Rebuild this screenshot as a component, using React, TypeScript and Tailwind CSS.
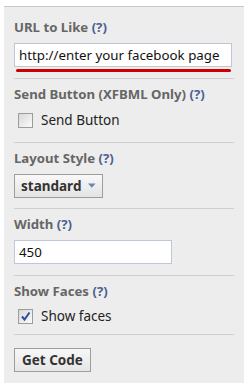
import React, { useState } from "react";

const font = { fontFamily: '"Noto Sans", Tahoma, sans-serif' };

const Label: React.FC<{ text: string }> = ({ text }) => (
  <div className="text-[13.2px] leading-[16px] font-bold text-[#666666]">
    {text} <span className="text-[#4b5f91]">(?)</span>
  </div>
);

const Separator: React.FC<{ className?: string }> = ({ className }) => (
  <div className={`h-px bg-[#cfcfcf] ${className ?? ""}`} />
);

const CheckBox: React.FC<{ checked: boolean; label: string; onToggle: () => void }> = ({
  checked,
  label,
  onToggle,
}) => (
  <div className="flex items-center gap-[8px] pl-[4px] cursor-pointer" onClick={onToggle}>
    <div className="w-[15px] h-[15px] border border-[#9c9c9c] bg-gradient-to-br from-[#d8d8d8] to-[#fbfbfb] flex items-center justify-center">
      {checked && (
        <svg width="11" height="11" viewBox="0 0 11 11">
          <path d="M2 5.5 L4.5 8.5 L9.5 1.5" fill="none" stroke="#2c4ea0" strokeWidth="2" />
        </svg>
      )}
    </div>
    <span className="text-[13.5px] leading-[16px] text-[#222222]">{label}</span>
  </div>
);

export default function App() {
  const [url, setUrl] = useState("http://enter your facebook page");
  const [width, setWidth] = useState("450");
  const [send, setSend] = useState(false);
  const [faces, setFaces] = useState(true);

  return (
    <div className="bg-white w-[252px] h-[388px] pt-[6px] pl-[4px]" style={font}>
      <div className="w-[240px] h-[377px] border-t border-[#c8c8c8] bg-[#ededed] px-[10px] pt-[12px]">
        {/* URL */}
        <Label text="URL to Like" />
        <input
          value={url}
          onChange={(e) => setUrl(e.target.value)}
          className="mt-[8px] block w-[218px] h-[24px] border border-[#bdc7d8] bg-white px-[4px] text-[13.3px] text-[#111111] outline-none"
          style={font}
        />
        <div className="mt-[2px] ml-[2px] w-[215px] h-[3px] rounded-full bg-[#cc0000]" />
        <Separator className="mt-[6px] w-[220px]" />

        {/* Send button */}
        <div className="mt-[7px]">
          <Label text="Send Button (XFBML Only)" />
        </div>
        <div className="mt-[10px]">
          <CheckBox checked={send} label="Send Button" onToggle={() => setSend(!send)} />
        </div>
        <Separator className="mt-[14px] w-[220px]" />

        {/* Layout */}
        <div className="mt-[7px]">
          <Label text="Layout Style" />
        </div>
        <button
          className="mt-[8px] flex items-center h-[24px] w-[89px] border border-[#9d9d9d] bg-gradient-to-b from-[#f9f9f9] to-[#e3e3e3] px-[6px] text-[13.5px] font-bold text-[#333333]"
          style={font}
        >
          standard
          <svg className="ml-[7px]" width="9" height="6" viewBox="0 0 9 6">
            <path d="M0 0 H9 L4.5 5 Z" fill="#6d84b4" />
          </svg>
        </button>
        <Separator className="mt-[10px] w-[220px]" />

        {/* Width */}
        <div className="mt-[7px]">
          <Label text="Width" />
        </div>
        <input
          value={width}
          onChange={(e) => setWidth(e.target.value)}
          className="mt-[8px] block w-[158px] h-[24px] border border-[#bdc7d8] bg-white px-[4px] text-[13.3px] text-[#111111] outline-none"
          style={font}
        />
        <Separator className="mt-[11px] w-[220px]" />

        {/* Faces */}
        <div className="mt-[7px]">
          <Label text="Show Faces" />
        </div>
        <div className="mt-[9px]">
          <CheckBox checked={faces} label="Show faces" onToggle={() => setFaces(!faces)} />
        </div>
        <Separator className="mt-[10px] w-[220px]" />

        <button
          className="mt-[13px] h-[24px] px-[7px] border border-[#9d9d9d] bg-gradient-to-b from-[#f7f7f7] to-[#e6e6e6] text-[13.5px] font-bold text-[#333333]"
          style={font}
        >
          Get Code
        </button>
      </div>
    </div>
  );
}
